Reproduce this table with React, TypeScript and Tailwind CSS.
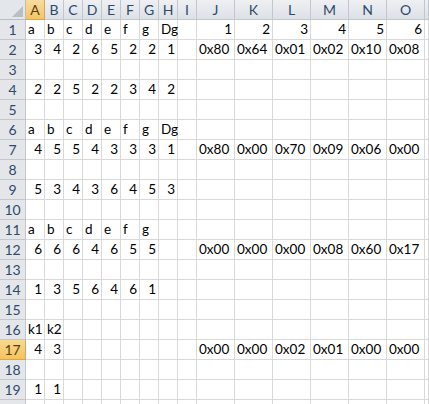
import React from 'react'

const cols = ['A', 'B', 'C', 'D', 'E', 'F', 'G', 'H', 'I', 'J', 'K', 'L', 'M', 'N', 'O', '']

// cell values per row, keyed by column index (0 = A)
const data: Record<number, (string | number | null)[]> = {
  1: ['a', 'b', 'c', 'd', 'e', 'f', 'g', 'Dg', null, 1, 2, 3, 4, 5, 6],
  2: [3, 4, 2, 6, 5, 2, 2, 1, null, '0x80', '0x64', '0x01', '0x02', '0x10', '0x08'],
  4: [2, 2, 5, 2, 2, 3, 4, 2],
  6: ['a', 'b', 'c', 'd', 'e', 'f', 'g', 'Dg'],
  7: [4, 5, 5, 4, 3, 3, 3, 1, null, '0x80', '0x00', '0x70', '0x09', '0x06', '0x00'],
  9: [5, 3, 4, 3, 6, 4, 5, 3],
  11: ['a', 'b', 'c', 'd', 'e', 'f', 'g'],
  12: [6, 6, 6, 4, 6, 5, 5, null, null, '0x00', '0x00', '0x00', '0x08', '0x60', '0x17'],
  14: [1, 3, 5, 6, 4, 6, 1],
  16: ['k1', 'k2'],
  17: [4, 3, null, null, null, null, null, null, null, '0x00', '0x00', '0x02', '0x01', '0x00', '0x00'],
  19: [1, 1],
}

const ACTIVE_ROW = 17

export default function App() {
  // row 20 only peeks in at the bottom edge, so it gets no label
  const rows = Array.from({ length: 20 }, (_, i) => i + 1)

  return (
    <div
      className="w-[429px] h-[404px] overflow-hidden bg-white text-[13.5px] text-black"
      style={{ fontFamily: 'Lato, "Liberation Sans", sans-serif' }}
    >
      <div className="grid grid-cols-[26px_repeat(9,19px)_repeat(6,38px)_1fr] auto-rows-[20px]">
        {/* corner */}
        <div className="relative bg-[#e3e6ea] border-r border-b border-[#b8bec6]">
          <div className="absolute right-[2px] bottom-[2px] w-0 h-0 border-l-[11px] border-l-transparent border-b-[11px] border-b-[#b9bec5]" />
        </div>
        {cols.map((c, i) => (
          <div
            key={'h' + i}
            className={`flex items-center justify-center border-r border-b text-[14px] ${
              i === 0
                ? 'bg-gradient-to-b from-[#f9dba0] to-[#f2c567] border-[#e3a43f] text-[#5a3f12]'
                : 'bg-gradient-to-b from-[#eef0f3] to-[#dde1e6] border-[#c2c7ce] text-[#2e4a6b]'
            }`}
          >
            {c}
          </div>
        ))}

        {rows.map(r => {
          const vals = data[r] || []
          return (
            <React.Fragment key={r}>
              <div
                className={`flex items-center justify-center border-r border-b text-[14px] ${
                  r === ACTIVE_ROW
                    ? 'bg-gradient-to-b from-[#f9d98f] to-[#f3c35d] border-[#e3a43f] text-[#5a3f12]'
                    : 'bg-[#e4e6ea] border-[#c2c7ce] text-[#2e4a6b]'
                }`}
              >
                {r < 20 ? r : ''}
              </div>
              {cols.map((_, ci) => {
                const v = vals[ci]
                const isNum = typeof v === 'number'
                return (
                  <div
                    key={ci}
                    className={`flex items-center whitespace-nowrap overflow-visible border-r border-b border-[#d9d9d9] leading-[19px] ${
                      isNum ? 'justify-end pr-[2px]' : 'justify-start pl-[2px]'
                    }`}
                  >
                    {v ?? ''}
                  </div>
                )
              })}
            </React.Fragment>
          )
        })}
      </div>
    </div>
  )
}
